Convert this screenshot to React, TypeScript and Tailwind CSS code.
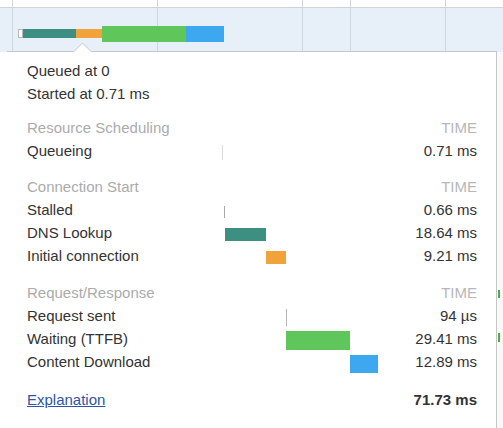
import React from 'react';

const SCALE = 2.18;

type Bar = { start: number; dur: number; h: number; color: string; line?: boolean };
type Entry = { label: string; value: string; bar: Bar };

const sections: { title: string; rows: Entry[] }[] = [
  {
    title: 'Resource Scheduling',
    rows: [{ label: 'Queueing', value: '0.71 ms', bar: { start: 0, dur: 0, h: 15, color: '#dcdcdc', line: true } }],
  },
  {
    title: 'Connection Start',
    rows: [
      { label: 'Stalled', value: '0.66 ms', bar: { start: 0.71, dur: 0, h: 12, color: '#a8a8a8', line: true } },
      { label: 'DNS Lookup', value: '18.64 ms', bar: { start: 1.37, dur: 18.64, h: 13, color: '#3d8f81' } },
      { label: 'Initial connection', value: '9.21 ms', bar: { start: 20.01, dur: 9.21, h: 13, color: '#f2a23a' } },
    ],
  },
  {
    title: 'Request/Response',
    rows: [
      { label: 'Request sent', value: '94 µs', bar: { start: 29.22, dur: 0, h: 17, color: '#b4b4b4', line: true } },
      { label: 'Waiting (TTFB)', value: '29.41 ms', bar: { start: 29.31, dur: 29.41, h: 19, color: '#5fc65b' } },
      { label: 'Content Download', value: '12.89 ms', bar: { start: 58.72, dur: 12.89, h: 18, color: '#3da7ef' } },
    ],
  },
];

const sectionGaps = ['mt-[11px]', 'mt-[13px]', 'mt-[14px]'];

function TopStrip() {
  return (
    <svg width="503" height="52" className="block">
      <rect x="0" y="0" width="503" height="52" fill="#ffffff" />
      <rect x="0" y="7" width="503" height="45" fill="#e7eff9" />
      <line x1="0" y1="7.5" x2="503" y2="7.5" stroke="#cdd4dc" />
      {[12.5, 157.5, 302.5, 350.5, 445.5].map((x) => (
        <line key={x} x1={x} y1="0" x2={x} y2="52" stroke="#cfd7e0" />
      ))}
      <rect x="18.5" y="29.5" width="4" height="8" fill="#ffffff" stroke="#b9b9b9" />
      <rect x="23" y="29" width="53" height="9" fill="#3d8f81" />
      <rect x="76" y="29" width="26" height="9" fill="#f2a23a" />
      <rect x="102" y="26" width="84" height="16" fill="#5fc65b" />
      <rect x="186" y="26" width="38" height="16" fill="#3da7ef" />
      <polygon points="73.5,52 82.5,43 91.5,52" fill="#ffffff" />
      <path d="M7 51.5 H74 L82.5 43 L91 51.5 H497" fill="none" stroke="#c6c6c6" />
    </svg>
  );
}

function TimelineBar({ bar }: { bar: Bar }) {
  const left = Math.round(bar.start * SCALE);
  const width = bar.line ? 1 : Math.round(bar.dur * SCALE);
  const top = Math.round((23 - bar.h) / 2) + 1;
  return (
    <div
      className="absolute"
      style={{ left, width, top, height: bar.h, backgroundColor: bar.color }}
    />
  );
}

function Row({ entry }: { entry: Entry }) {
  return (
    <div className="flex items-center h-[23px]">
      <div className="w-[195px]">{entry.label}</div>
      <div className="relative w-[158px] h-full">
        <TimelineBar bar={entry.bar} />
      </div>
      <div className="flex-1 text-right">{entry.value}</div>
    </div>
  );
}

export default function App() {
  return (
    <div className="w-[503px] h-[428px] overflow-hidden bg-white font-['Liberation_Sans',Arial,sans-serif] text-[15px] text-[#333333]">
      <TopStrip />
      <div className="flex">
        <div className="w-[7px]" />
        <div className="w-[490px] h-[376px] border-r border-[#c6c6c6] pl-[20px] pr-[19px] pt-[8px]">
          <div className="flex items-center h-[23px]">Queued at 0</div>
          <div className="flex items-center h-[23px]">Started at 0.71 ms</div>

          {sections.map((s, i) => (
            <div key={s.title} className={sectionGaps[i]}>
              <div className="flex items-center h-[23px]">
                <div className="flex-1 text-[#ababab]">{s.title}</div>
                <div className="text-[#b7b7b7] uppercase">Time</div>
              </div>
              {s.rows.map((r) => (
                <Row key={r.label} entry={r} />
              ))}
            </div>
          ))}

          <div className="flex items-center h-[23px] mt-[15px]">
            <a href="#" className="flex-1 text-[#2d55a8] underline">
              Explanation
            </a>
            <div className="font-bold">71.73 ms</div>
          </div>
        </div>
        <div className="relative flex-1 h-[376px] bg-[#f9f9f9]">
          <div className="absolute left-[1px] top-[238px] w-[2px] h-[8px] bg-[#4cae4c]" />
          <div className="absolute left-[1px] top-[281px] w-[2px] h-[9px] bg-[#4cae4c]" />
        </div>
      </div>
    </div>
  );
}
